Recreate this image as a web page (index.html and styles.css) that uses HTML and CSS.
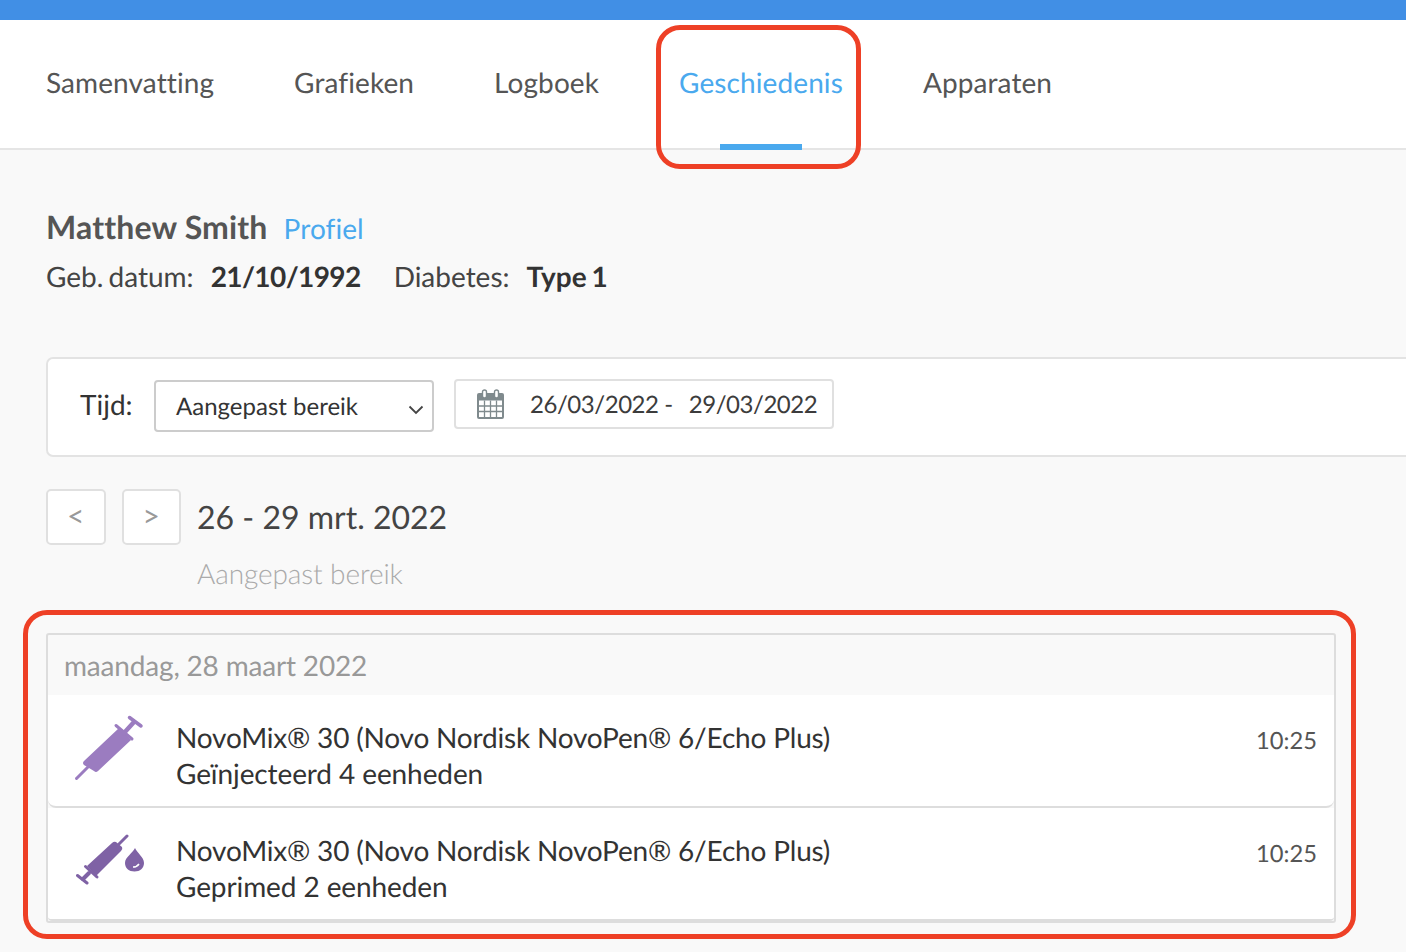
FILE: index.html
```html
<!DOCTYPE html>
<html lang="nl">
<head>
<meta charset="utf-8">
<title>Geschiedenis</title>
<link rel="stylesheet" href="styles.css">
</head>
<body>
<div class="topbar"></div>
<nav class="tabs">
  <a class="tab">Samenvatting</a>
  <a class="tab">Grafieken</a>
  <a class="tab">Logboek</a>
  <a class="tab active">Geschiedenis</a>
  <a class="tab">Apparaten</a>
</nav>
<main class="content">
  <section class="patient">
    <div class="name-row"><h1 class="name">Matthew Smith</h1><a class="profile">Profiel</a></div>
    <div class="meta-row">
      <span class="tight">Geb. datum:</span><b class="val date-val">21/10/1992</b>
      <span class="second">Diabetes:</span><b class="val tight">Type 1</b>
    </div>
  </section>
  <section class="filter">
    <span class="filter-label">Tijd:</span>
    <div class="select">
      <span>Aangepast bereik</span>
      <svg class="chev" width="16" height="10" viewBox="0 0 16 10"><path d="M1.5 1.5 8 8l6.5-6.5" fill="none" stroke="#444" stroke-width="1.8"/></svg>
    </div>
    <div class="daterange">
      <svg class="cal" width="29" height="31" viewBox="0 0 29 31">
        <rect x="1" y="4" width="27" height="26" rx="2" fill="#7f8a8d"/>
        <rect x="6.500" y="1" width="4" height="8" rx="2" fill="#fff" stroke="#7f8a8d" stroke-width="1.400"/>
        <rect x="18.500" y="1" width="4" height="8" rx="2" fill="#fff" stroke="#7f8a8d" stroke-width="1.400"/>
        <path d="M3 11.500h23V28H3z" fill="#fff"/>
        <path d="M3 17h23M3 22.500h23M8.500 11.500V28M14.500 11.500V28M20.500 11.500V28" stroke="#7f8a8d" stroke-width="1.300"/>
      </svg>
      <span class="date-a">26/03/2022 -</span><span class="date-b">29/03/2022</span>
    </div>
  </section>
  <section class="period">
    <button class="nav-btn">&lt;</button>
    <button class="nav-btn">&gt;</button>
    <div class="period-text">
      <div class="period-title">26 - 29 mrt. 2022</div>
      <div class="period-sub">Aangepast bereik</div>
    </div>
  </section>
  <section class="history">
    <div class="day">maandag, 28 maart 2022</div>
    <div class="row">
      <svg class="ico" width="70" height="68" viewBox="0 0 70 68">
        <path d="M10 47 45 14 57 26 24 57q-2 2-4 0l-10-6q-2-2 0-4z" fill="#9b7cc0"/>
        <g fill="none" stroke="#9b7cc0" stroke-linecap="round">
          <path d="M42 11.500 58 25" stroke-width="3"/>
          <path d="M50 19 60 8" stroke-width="4.500"/>
          <path d="M55.500 3.500 67 12" stroke-width="3.500"/>
          <path d="M2.500 64.500 14 53" stroke-width="3"/>
        </g>
      </svg>
      <div class="row-text">
        <div class="product">NovoMix® 30 (Novo Nordisk NovoPen® 6/Echo Plus)</div>
        <div class="detail">Geïnjecteerd 4 eenheden</div>
      </div>
      <time class="time">10:25</time>
    </div>
    <div class="row last">
      <svg class="ico" width="70" height="54" viewBox="0 0 70 54">
        <path d="M36 9q2-2 4-1l6 5q1 2-1 4L20 42 11 32z" fill="#7f62a5"/>
        <g fill="none" stroke="#7f62a5" stroke-linecap="round">
          <path d="M9.500 32.500 21 43" stroke-width="3"/>
          <path d="M13 39 7 45" stroke-width="4"/>
          <path d="M1.500 41.500 11 49" stroke-width="3"/>
          <path d="M51 2 43 10" stroke-width="3"/>
        </g>
        <path d="M59 14c2 5 9 9 9 15 0 5-4 8.500-9.500 8.500S49 34 49 29c0-6 8-10 10-15z" fill="#7f62a5"/>
        <path d="M57 33q4 0 6-3" fill="none" stroke="#fff" stroke-width="1.500"/>
      </svg>
      <div class="row-text">
        <div class="product">NovoMix® 30 (Novo Nordisk NovoPen® 6/Echo Plus)</div>
        <div class="detail">Geprimed 2 eenheden</div>
      </div>
      <time class="time">10:25</time>
    </div>
  </section>
</main>
<div class="mark mark-tab"></div>
<div class="mark mark-history"></div>
</body>
</html>
```
FILE: styles.css
```css
* { box-sizing: border-box; }
html, body { margin: 0; height: 952px; overflow: hidden; }
body { position: relative; background: #f9f9f9; font-family: "Lato", sans-serif; color: #333; text-rendering: geometricPrecision; }
.topbar { height: 20px; background: #418fe5; }
.tabs { display: flex; gap: 80px; height: 130px; padding: 0 46px; background: #fff; border-bottom: 2px solid #e5e5e5; }
.tab { position: relative; font-size: 28px; line-height: 34px; padding-top: 45px; color: #555; letter-spacing: .1px; }
.tab.active { color: #4aa9ee; }
.tab.active::after { content: ""; position: absolute; left: 41px; bottom: -2px; width: 82px; height: 6px; background: #4aa9ee; }
.content { padding: 0 0 0 46px; }
.patient { padding-top: 57px; }
.name-row { display: flex; align-items: baseline; gap: 16px; height: 40px; }
.name { margin: 0; font-size: 32px; line-height: 40px; font-weight: 700; color: #555; letter-spacing: .16px; }
.profile { font-size: 28px; color: #4aa9ee; letter-spacing: .08px; }
.meta-row { margin-top: 11px; font-size: 28px; line-height: 36px; color: #444; display: flex; }
.tight { word-spacing: -2px; }
.val { font-weight: 700; color: #333; margin-left: 17px; }
.date-val { letter-spacing: -.6px; }
.second { margin-left: 33px; }
.filter { display: flex; align-items: flex-start; margin-top: 63px; width: 1400px; height: 100px; padding: 21px 0 0 32px; background: #fff; border: 2px solid #e3e3e3; border-radius: 7px; }
.filter-label { width: 74px; font-size: 28px; line-height: 30px; padding-top: 9px; color: #333; }
.select { display: flex; align-items: center; justify-content: space-between; width: 280px; height: 52px; padding: 0 8px 0 20px; border: 2px solid #ccc; border-radius: 4px; font-size: 24px; color: #333; background: #fff; }
.chev { margin-top: 7px; }
.daterange { display: flex; align-items: center; width: 380px; height: 50px; margin-left: 20px; margin-top: -1px; padding-left: 20px; border: 2px solid #e0e0e0; border-radius: 4px; font-size: 24px; font-weight: 400; color: #3c3c3c; white-space: nowrap; letter-spacing: -.45px; }
.cal { flex: none; margin-right: 25px; }
.date-b { margin-left: 16px; }
.period { display: flex; align-items: flex-start; gap: 16px; margin-top: 32px; }
.nav-btn { width: 59.500px; height: 56px; padding: 0 0 4px; background: #fff; border: 2px solid #e0e0e0; border-radius: 5px; font-family: inherit; font-size: 30px; font-weight: 400; color: #999; }
.period-title { font-size: 32px; line-height: 42px; margin-top: 7px; color: #444; }
.period-sub { margin-top: 18px; font-size: 28px; line-height: 34px; font-weight: 300; color: #aaa; letter-spacing: -.1px; }
.history { width: 1290px; margin-top: 43px; border: 2px solid #ddd; border-radius: 3px; background: #f9f9f9; }
.day { height: 60px; padding: 0 16px; font-size: 28px; line-height: 60px; color: #999; letter-spacing: -.18px; }
.row { display: flex; height: 113px; background: #fff; border-bottom: 2px solid #ddd; border-radius: 0 0 8px 8px; position: relative; }
.row.last { border-radius: 0 0 4px 4px; }
.ico { flex: none; position: absolute; left: 26px; top: 19px; }
.row.last .ico { top: 26px; left: 28px; }
.row-text { margin-left: 128px; padding-top: 24px; flex: 1; }
.product, .detail { font-size: 28px; line-height: 36px; color: #333; }
.product { letter-spacing: -.19px; }
.detail { letter-spacing: -.1px; }
.time { padding: 29px 17px 0 0; font-size: 23.700px; line-height: 34px; color: #555; }
.mark { position: absolute; border: 5px solid #ee4026; pointer-events: none; }
.mark-tab { left: 656px; top: 25px; width: 205px; height: 144px; border-radius: 24px; }
.mark-history { left: 23px; top: 610px; width: 1333px; height: 329px; border-radius: 24px; }
```
